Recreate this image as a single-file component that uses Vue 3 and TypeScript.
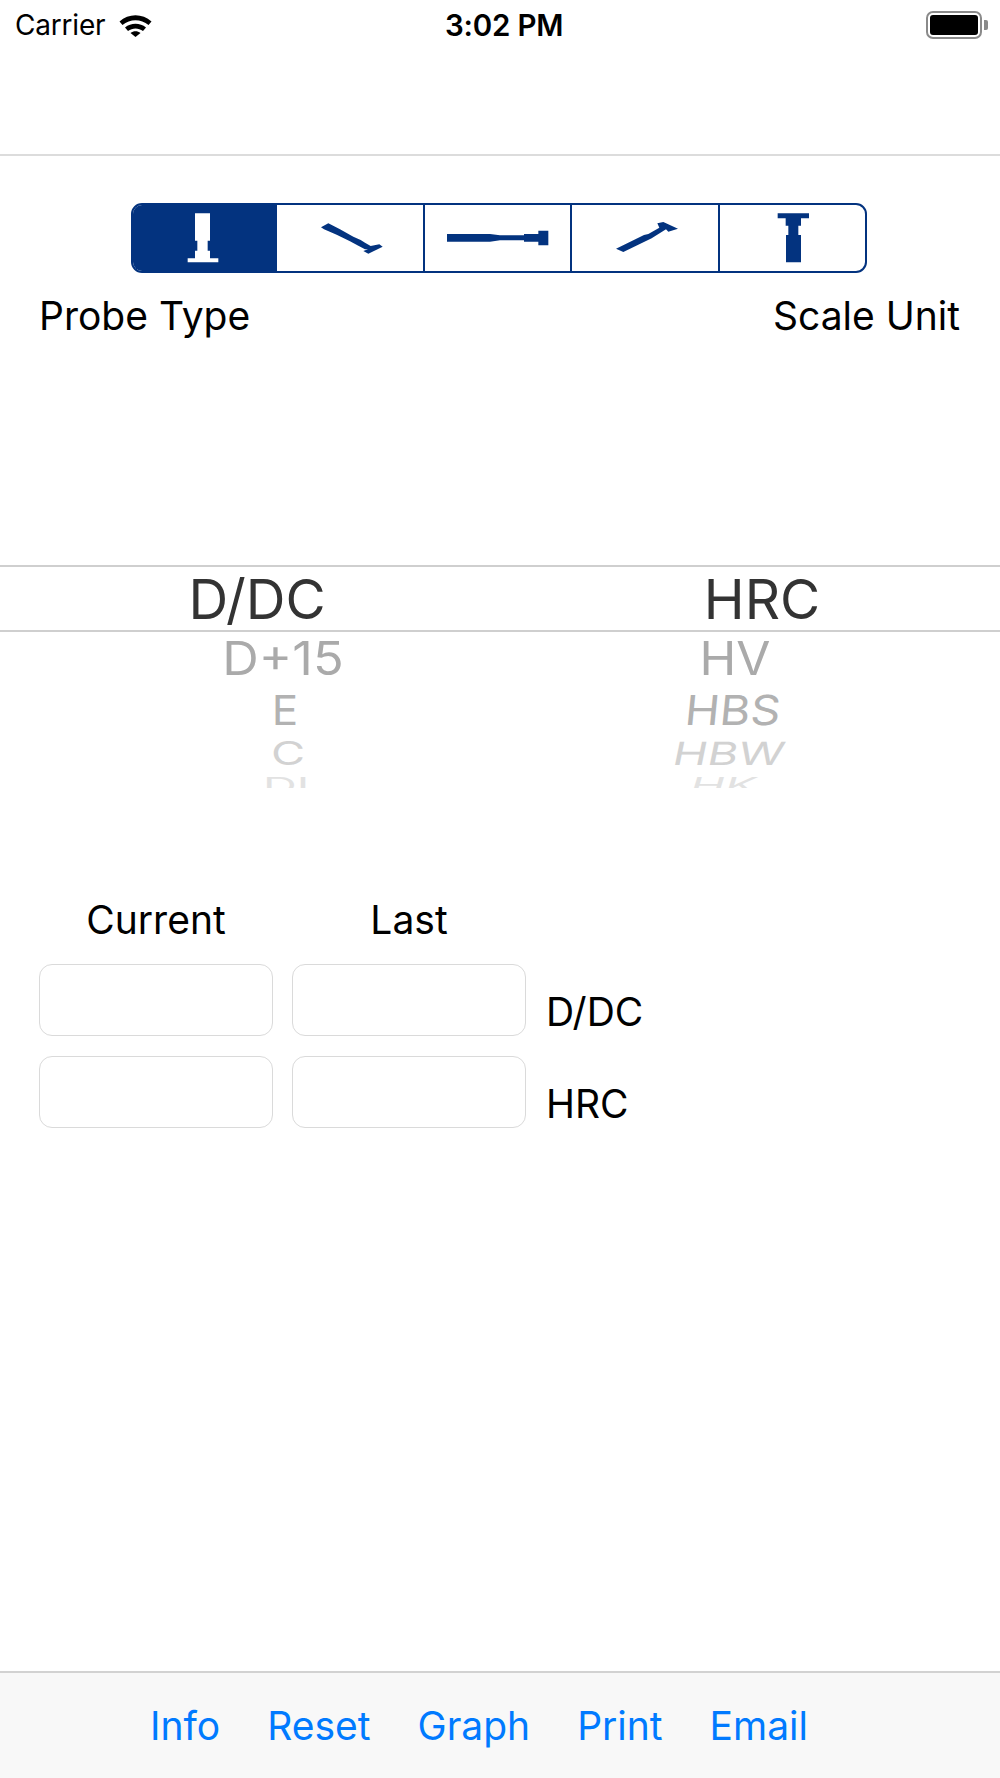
<template>
  <div class="screen">
    <header class="status">
      <div class="status-left">
        <span class="carrier">Carrier</span>
        <svg class="wifi" viewBox="0 0 33 24">
          <path d="M0.5 8.5C9.5 0 23.5 0 32.5 8.5L29.5 12C22 5.5 11 5.5 3.5 12Z" />
          <path d="M6 14.5C12 9.5 21 9.5 27 14.5L24 18C19.5 14.5 13.5 14.5 9 18Z" />
          <path d="M11.5 20C14.5 17.7 18.5 17.7 21.5 20L16.5 24Z" />
        </svg>
      </div>
      <span class="time">3:02 PM</span>
      <div class="battery">
        <div class="battery-body"><div class="battery-fill" /></div>
        <div class="battery-cap" />
      </div>
    </header>
    <div class="nav" />

    <div class="segments">
      <div v-for="(seg, i) in segments" :key="i" class="segment" :class="{ active: i === 0 }">
        <svg class="probe" :viewBox="seg.box">
          <path :d="seg.d" />
        </svg>
      </div>
    </div>
    <div class="captions">
      <span>Probe Type</span>
      <span>Scale Unit</span>
    </div>

    <div class="wheel">
      <div v-for="(row, i) in rows" :key="i" class="wheel-row" :class="{ selected: i === 0 }" :style="{ height: row.height + 'px' }">
        <span class="wheel-cell" v-for="cell in row.cells" :key="cell.text" :style="{ transform: cell.transform, color: row.color }">{{ cell.text }}</span>
      </div>
    </div>

    <div class="readings">
      <div class="heads">
        <span>Current</span>
        <span>Last</span>
      </div>
      <div v-for="unit in ['D/DC', 'HRC']" :key="unit" class="reading-row">
        <div class="field" />
        <div class="field" />
        <span class="unit">{{ unit }}</span>
      </div>
    </div>

    <footer class="toolbar">
      <span v-for="item in tools" :key="item">{{ item }}</span>
    </footer>
  </div>
</template>

<script setup lang="ts">
const segments = [
  { box: "39 45 432 198", d: "M225 70H270V152H263V182H270V205H295V217H203V205H225V182H232V152H225Z" },
  { box: "471 45 438 198", d: "M625 100L603 112L612 118L650 134L690 154L715 167L735 178L744 178L730 183L745 191L788 170L778 163L752 168L735 158L722 150L700 140L660 118Z" },
  { box: "-225 45 435 198", d: "M-159 132H-30L0 136H72V132H115V122H145V166H115V155H72V151H0L-30 155H-159Z" },
  { box: "216 45 438 198", d: "M348 176L432 135L445 132L478 113L472 100L490 96L534 116L505 125L498 118L455 145L370 186Z" },
  { box: "660 45 435 198", d: "M833 70H927V85H903V107H895V135H903V217H858V135H865V107H857V85H833Z" }
];

const rows = [
  {
    height: 67,
    color: "#333",
    cells: [
      { text: "D/DC", transform: "translateX(7px)" },
      { text: "HRC", transform: "translateX(12px)" }
    ]
  },
  {
    height: 52,
    color: "#aaa",
    cells: [
      { text: "D+15", transform: "translateX(33px) scale(0.92, 0.85)" },
      { text: "HV", transform: "translateX(-15px) scale(0.9, 0.85)" }
    ]
  },
  {
    height: 52,
    color: "#b2b2b2",
    cells: [
      { text: "E", transform: "translateX(35px) scale(0.8, 0.75)" },
      { text: "HBS", transform: "translateX(-17px) scale(0.85, 0.75) skewX(-5deg)" }
    ]
  },
  {
    height: 34,
    color: "#d2d2d2",
    cells: [
      { text: "C", transform: "translateX(38px) scale(0.85, 0.58)" },
      { text: "HBW", transform: "translateX(-21px) scale(0.85, 0.58) skewX(-8deg)" }
    ]
  },
  {
    height: 30,
    color: "#e2e2e2",
    cells: [
      { text: "DL", transform: "translateX(43px) scale(0.85, 0.4)" },
      { text: "HK", transform: "translateX(-26px) scale(0.85, 0.4) skewX(-8deg)" }
    ]
  }
];

const tools = ["Info", "Reset", "Graph", "Print", "Email"];
</script>

<style>
body {
  background: #fff;
}
</style>

<style scoped>
.screen {
  width: 1000px;
  height: 1778px;
  display: flex;
  flex-direction: column;
  background: #fff;
  color: #000;
  font-family: Inter, "Liberation Sans", sans-serif;
  overflow: hidden;
}
.status {
  height: 50px;
  padding: 0 12px 0 15px;
  display: flex;
  align-items: center;
  justify-content: space-between;
  position: relative;
  font-size: 28px;
}
.status-left {
  display: flex;
  align-items: center;
  gap: 14px;
}
.carrier {
  letter-spacing: -0.2px;
}
.wifi {
  width: 33px;
  height: 24px;
  fill: #000;
}
.time {
  position: absolute;
  left: 445px;
  font-size: 29.5px;
  font-weight: 600;
  letter-spacing: -0.2px;
}
.battery {
  display: flex;
  align-items: center;
  gap: 2px;
}
.battery-body {
  width: 56px;
  height: 28px;
  box-sizing: border-box;
  border: 2px solid #8a8a8a;
  border-radius: 7px;
  padding: 2px;
}
.battery-fill {
  height: 100%;
  background: #000;
  border-radius: 3px;
}
.battery-cap {
  width: 4px;
  height: 10px;
  background: #8a8a8a;
  border-radius: 0 2px 2px 0;
}
.nav {
  height: 106px;
  box-sizing: border-box;
  border-bottom: 2px solid #dcdcdc;
}
.segments {
  margin: 47px 0 0 131px;
  width: 736px;
  height: 70px;
  box-sizing: border-box;
  border: 2px solid #03337f;
  border-radius: 11px;
  display: grid;
  grid-template-columns: 144px 148px 147px 148px 145px;
  overflow: hidden;
}
.segment {
  min-width: 0;
  border-right: 2px solid #03337f;
  display: flex;
}
.segment:first-child,
.segment:last-child {
  border-right: 0;
}
.segment.active {
  background: #03337f;
}
.probe {
  width: 100%;
  height: 100%;
  fill: #03337f;
}
.active .probe {
  fill: #fff;
}
.captions {
  margin-top: 19px;
  padding: 0 40px 0 39px;
  display: flex;
  justify-content: space-between;
  font-size: 39px;
  line-height: 48px;
}
.wheel {
  margin-top: 225px;
  height: 223px;
  overflow: hidden;
}
.wheel-row {
  display: grid;
  grid-template-columns: 1fr 1fr;
  align-items: center;
  align-content: center;
  box-sizing: border-box;
}
.wheel-row.selected {
  border-top: 2px solid #cfcfcf;
  border-bottom: 2px solid #cfcfcf;
}
.wheel-cell {
  text-align: center;
  font-size: 55px;
  line-height: 50px;
}
.readings {
  margin-top: 108px;
  padding-left: 39px;
}
.heads {
  display: grid;
  grid-template-columns: 234px 234px;
  column-gap: 19px;
  text-align: center;
  font-size: 39px;
  line-height: 48px;
  margin-bottom: 20px;
}
.reading-row {
  display: flex;
  gap: 19px;
  height: 72px;
  margin-bottom: 20px;
}
.field {
  width: 234px;
  height: 72px;
  box-sizing: border-box;
  border: 1.5px solid #dadada;
  border-radius: 13px;
}
.unit {
  margin: 24px 0 0 1px;
  font-size: 39px;
  line-height: 48px;
}
.toolbar {
  margin-top: auto;
  height: 107px;
  box-sizing: border-box;
  background: #f8f8f8;
  border-top: 2px solid #d2d2d2;
  padding-right: 42px;
  display: flex;
  align-items: center;
  justify-content: center;
  gap: 47px;
  color: #007aff;
  font-size: 39px;
}
</style>
